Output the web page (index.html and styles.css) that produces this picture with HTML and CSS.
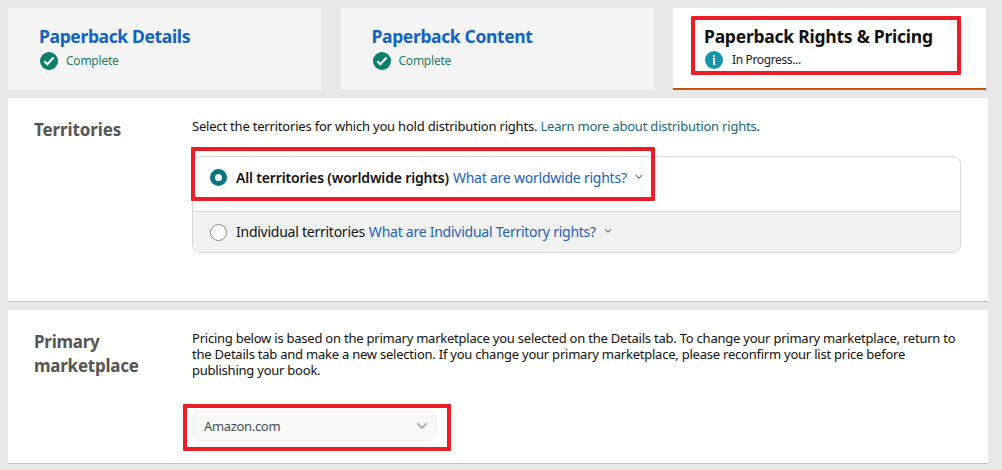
FILE: index.html
```html
<!DOCTYPE html>
<html lang="en">

<head>
    <meta charset="UTF-8">
    <meta name="viewport" content="width=device-width, initial-scale=1.0">
    <title>Paperback Rights &amp; Pricing</title>
    <link rel="stylesheet" href="styles.css">
</head>

<body>
    <!-- Steps -->
    <nav class="tabs">
        <a class="tab" href="#">
            <h2>Paperback Details</h2>
            <div class="status">
                <svg class="status-icon" viewBox="0 0 18 18">
                    <circle cx="9" cy="9" r="9" fill="#087f69" />
                    <path d="M4.300 9.300l3 2.900 6.400-6.600" fill="none" stroke="#fff" stroke-width="2.200" />
                </svg>
                <span>Complete</span>
            </div>
        </a>
        <a class="tab" href="#">
            <h2>Paperback Content</h2>
            <div class="status">
                <svg class="status-icon" viewBox="0 0 18 18">
                    <circle cx="9" cy="9" r="9" fill="#087f69" />
                    <path d="M4.300 9.300l3 2.900 6.400-6.600" fill="none" stroke="#fff" stroke-width="2.200" />
                </svg>
                <span>Complete</span>
            </div>
        </a>
        <a class="tab active" href="#">
            <h2>Paperback Rights &amp; Pricing</h2>
            <div class="status">
                <svg class="status-icon" viewBox="0 0 18 18">
                    <circle cx="9" cy="9" r="9" fill="#1196ab" />
                    <path d="M9 7v7M9 4v2" fill="none" stroke="#fff" stroke-width="2" />
                    <path d="M7.500 7.500h1.500M9 13.500h1.500" fill="none" stroke="#fff" />
                </svg>
                <span>In Progress...</span>
            </div>
            <span class="highlight highlight-tab"></span>
        </a>
    </nav>

    <!-- Territories -->
    <section class="panel territories">
        <h3>Territories</h3>
        <div class="panel-body">
            <p class="intro">Select the territories for which you hold distribution rights. <a class="learn" href="#">Learn more about distribution rights<span class="stop">.</span></a></p>
            <div class="options">
                <div class="option">
                    <span class="radio checked"></span>
                    <b>All territories (worldwide rights)</b>
                    <a class="help" href="#">What are worldwide rights?</a>
                    <svg class="caret" viewBox="0 0 8 6"><path d="M1 1.200l3 3 3-3" /></svg>
                </div>
                <div class="option muted">
                    <span class="radio"></span>
                    <span>Individual territories</span>
                    <a class="help" href="#">What are Individual Territory rights?</a>
                    <svg class="caret" viewBox="0 0 8 6"><path d="M1 1.200l3 3 3-3" /></svg>
                </div>
                <span class="highlight highlight-option"></span>
            </div>
        </div>
    </section>

    <!-- Primary marketplace -->
    <section class="panel marketplace">
        <h3>Primary marketplace</h3>
        <div class="panel-body">
            <p>Pricing below is based on the primary marketplace you selected on the Details tab. To change your primary marketplace, return to<br>
                the Details tab and make a new selection. If you change your primary marketplace, please reconfirm your list price before<br>
                publishing your book.</p>
            <div class="select">
                <span>Amazon.com</span>
                <svg class="select-caret" viewBox="0 0 12 8"><path d="M1.500 1.200L6 6l4.500-4.800" /></svg>
                <span class="highlight highlight-select"></span>
            </div>
        </div>
    </section>
</body>

</html>
```

FILE: styles.css
```css
* {
    box-sizing: border-box;
}

body {
    margin: 0;
    height: 470px;
    overflow: hidden;
    padding: 8px 14px 0 8px;
    background-color: #e8e8e8;
    color: #111;
    font-family: "Noto Sans", sans-serif;
    font-size: 13px;
    letter-spacing: -0.23px;
    line-height: 16px;
}

h2, h3, p {
    margin: 0;
}

a {
    text-decoration: none;
}

.tabs {
    display: grid;
    grid-template-columns: 313px 313px 313px;
    column-gap: 19.5px;
    height: 90px;
}

.tab {
    position: relative;
    height: 82px;
    padding: 16px 0 0 31px;
    background-color: #f5f5f5;
    color: #0f62c6;
}

.tab h2 {
    font-size: 17.5px;
    font-weight: 700;
    letter-spacing: -0.36px;
    line-height: 24px;
    white-space: nowrap;
}

.status {
    display: flex;
    align-items: center;
    gap: 8px;
    margin-top: 4px;
    padding-left: 1px;
    color: #1f7f68;
    font-size: 12px;
    line-height: 18px;
}

.status-icon {
    width: 18px;
    height: 18px;
}

.tab.active {
    background-color: #fff;
    border-bottom: 2px solid #c85507;
    color: #111;
}

.tab.active h2 {
    letter-spacing: -0.24px;
}

.active .status {
    gap: 9px;
    margin-top: 3px;
    color: #222;
    letter-spacing: -0.36px;
}

.panel {
    display: flex;
    padding-left: 26px;
    background-color: #fff;
    box-shadow: 0 1px 0 #c4c4c4;
}

.panel h3 {
    width: 158px;
    color: #555;
    font-size: 17px;
    font-weight: 700;
    letter-spacing: -0.25px;
    line-height: 24px;
}

.panel-body {
    width: 769px;
    white-space: nowrap;
}

.territories {
    height: 203px;
    padding-top: 20px;
}

.territories h3 {
    letter-spacing: -0.12px;
}

.marketplace {
    height: 153px;
    margin-top: 9px;
    padding-top: 20px;
}

.intro {
    letter-spacing: -0.2px;
}

.learn {
    color: #19697b;
}

.stop {
    color: #111;
}

.options {
    position: relative;
    margin-top: 22px;
    border: 1px solid #d5d9d9;
    border-radius: 8px;
    font-size: 14px;
}

.option {
    display: flex;
    align-items: center;
    height: 54px;
    padding: 0 0 13px 17px;
}

.option.muted {
    height: 41px;
    padding-bottom: 0;
    background-color: #f2f2f2;
    border-top: 1px solid #d5d9d9;
    border-radius: 0 0 7px 7px;
    letter-spacing: -0.25px;
}

.option b {
    font-weight: 600;
    letter-spacing: -0.17px;
}

.radio {
    width: 17px;
    height: 17px;
    margin-right: 9px;
    border: 1px solid #888c8c;
    border-radius: 50%;
    background-color: #fff;
}

.radio.checked {
    border: 5px solid #087383;
}

.help {
    margin-left: 4px;
    color: #2162bd;
}

.caret {
    width: 8px;
    height: 6px;
    margin: -2px 0 0 8px;
    fill: none;
    stroke: #777;
    stroke-width: 1.2;
}

.select {
    position: relative;
    display: flex;
    align-items: center;
    justify-content: space-between;
    width: 244px;
    height: 30px;
    margin-top: 33px;
    padding: 0 7px 0 11px;
    border: 1px solid #f0f2f2;
    border-radius: 7px;
    background-color: #f7f8f8;
    color: #494d50;
    letter-spacing: -0.33px;
}

.select-caret {
    width: 12px;
    height: 8px;
    fill: none;
    stroke: #b0b3b3;
    stroke-width: 2;
}

/* Red frames drawn over the page */
.highlight {
    position: absolute;
    border: 4px solid #ee1c25;
    border-radius: 1px;
}

.highlight-tab {
    left: 18px;
    top: 8px;
    width: 270px;
    height: 59px;
}

.highlight-option {
    left: -2px;
    top: -10px;
    width: 464px;
    height: 54px;
}

.highlight-select {
    left: -10px;
    top: -8px;
    width: 268px;
    height: 47px;
}
```
